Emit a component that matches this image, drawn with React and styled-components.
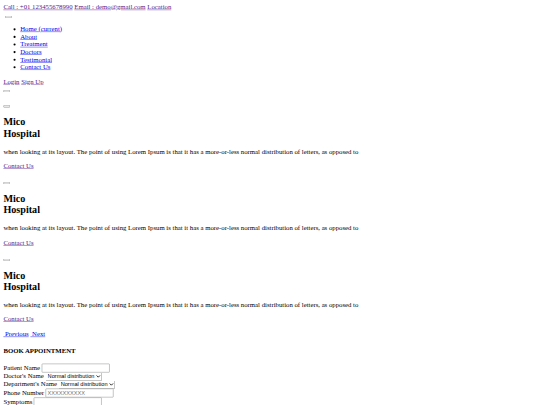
import React from "react";
import styled, { createGlobalStyle } from "styled-components";

// the reference is a plain, unstyled page shot at 1280 wide and shrunk to 540
const GlobalStyle = createGlobalStyle`
  html, body {
    margin: 0;
    overflow: hidden;
    background: #fff;
  }
`;

const Page = styled.div`
  width: 1280px;
  padding: 8px;
  box-sizing: border-box;
  transform: scale(0.421875);
  transform-origin: 0 0;
  font-family: "Liberation Serif", "Times New Roman", serif;
  font-size: 16px;
  color: #000;
`;

const Link = styled.a`
  color: ${(p) => (p.$visited ? "#551a8b" : "#0000ee")};
  text-decoration: underline;
  cursor: pointer;
`;

const Line = styled.div``;

// stands in for an image that did not load: an empty inline box
const ImageSlot = styled.span`
  display: inline-block;
  width: 0;
  height: 0;
`;

const PlainButton = styled.button``;

const NavList = styled.ul`
  margin: 16px 0;
  padding-left: 40px;
  list-style: disc;
`;

const NavItem = styled.li``;

const Form = styled.form`
  margin: 0;
`;

const Slide = styled.div``;

const Title = styled.h1`
  font-size: 24px;
  font-weight: bold;
  margin: 19.92px 0;
`;

const Text = styled.p`
  margin: 16px 0;
`;

const Heading = styled.h4`
  font-size: 16px;
  font-weight: bold;
  margin: 21.28px 0;
`;

const FormRow = styled.div``;

const Label = styled.label``;

const Field = styled.input`
  appearance: none;
  width: 153px;
  margin: 0;
  padding: 2px 3px;
  border: 1px solid #767676;
  border-radius: 2px;
  background: #fff;
  font: 13.33px "Liberation Sans", Arial, sans-serif;
  color: #000;

  &::placeholder {
    color: #757575;
  }
`;

const Choice = styled.select``;

const navLinks = ["About", "Treatment", "Doctors", "Testimonial", "Contact Us"];

const slideText =
  "when looking at its layout. The point of using Lorem Ipsum is that it has a more-or-less normal distribution of letters, as opposed to";

export default function App() {
  return (
    <Page>
      <GlobalStyle />
      <Line>
        <Link $visited href="#">
          <span>Call : +01 123455678990</span>
        </Link>{" "}
        <Link $visited href="#">
          <span>Email : demo@gmail.com</span>
        </Link>{" "}
        <Link $visited href="#">
          <span>Location</span>
        </Link>
      </Line>
      <Line>
        <ImageSlot /> <PlainButton type="button">
          <span />
        </PlainButton>
      </Line>
      <NavList>
        <NavItem>
          <Link href="#">
            Home <span>(current)</span>
          </Link>
        </NavItem>
        {navLinks.map((label) => (
          <NavItem key={label}>
            <Link href="#">{label}</Link>
          </NavItem>
        ))}
      </NavList>
      <Line>
        <Link $visited href="#">
          <span>Login</span>
        </Link>{" "}
        <Link $visited href="#">
          <span>Sign Up</span>
        </Link>
      </Line>
      <Form>
        <PlainButton type="submit">
          <span />
        </PlainButton>
      </Form>
      <Line>
        <ImageSlot />
      </Line>
      {[0, 1, 2].map((i) => (
        <Slide key={i}>
          <Line>
            <PlainButton type="button">
              <span />
            </PlainButton>
          </Line>
          <Title>
            Mico <br />
            <span>Hospital</span>
          </Title>
          <Text>{slideText}</Text>
          <Link $visited href="#">
            Contact Us
          </Link>
          <Line>
            <ImageSlot />
          </Line>
        </Slide>
      ))}
      <Line>
        <Link href="#">
          <ImageSlot /> <span>Previous</span>
        </Link>{" "}
        <Link href="#">
          <ImageSlot /> <span>Next</span>
        </Link>
      </Line>
      <form>
        <Heading>
          BOOK <span>APPOINTMENT</span>
        </Heading>
        <FormRow>
          <Label>Patient Name </Label>
          <Field type="text" />
        </FormRow>
        <FormRow>
          <Label>Doctor's Name</Label>{" "}
          <Choice>
            <option>Normal distribution </option>
          </Choice>
        </FormRow>
        <FormRow>
          <Label>Department's Name</Label>{" "}
          <Choice>
            <option>Normal distribution </option>
          </Choice>
        </FormRow>
        <FormRow>
          <Label>Phone Number</Label> <Field type="text" placeholder="XXXXXXXXXX" />
        </FormRow>
        <FormRow>
          <Label>Symptoms</Label> <Field type="text" />
        </FormRow>
      </form>
    </Page>
  );
}
